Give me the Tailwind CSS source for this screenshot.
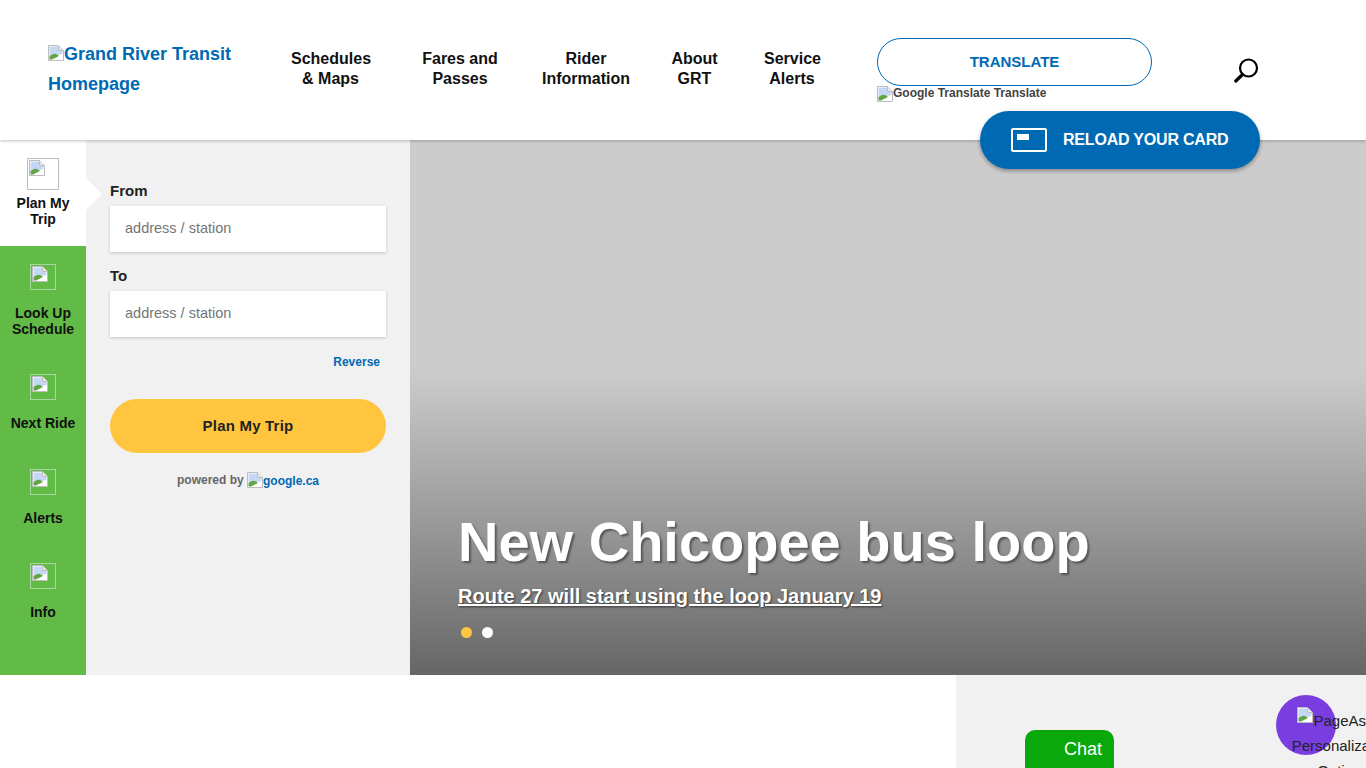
<!DOCTYPE html>
<html lang="en"><head><meta charset="utf-8"><title>Grand River Transit</title>
<script src="https://cdn.jsdelivr.net/npm/@tailwindcss/browser@4"></script></head>
<body class="m-0 h-[768px] w-[1366px] overflow-hidden bg-white font-['Liberation_Sans',Arial,sans-serif] relative">
<svg width="0" height="0" class="absolute"><defs>
<symbol id="broken" viewBox="0 0 16 16"><path d="M0.5 0.5H10.5L15.5 5.5V15.5H0.5Z" fill="#fff" stroke="#bdbdbd"/><path d="M1.5 1.5H10V6H14.5V9L1.5 12Z" fill="#c4d8f5"/><path d="M1.5 14.5V11.5C4 8.5 7 8 9 9.5L11 11L4 14.5Z" fill="#62a544"/><path d="M10.5 .5V5.5H15.5" fill="#e8e8e8" stroke="#bdbdbd"/><path d="M9 15L15 9V15Z" fill="#fff"/></symbol>
</defs></svg>
<header class="relative z-10 h-[140px] bg-white shadow-[0_1px_3px_rgba(0,0,0,0.25)]">
 <div class="flex h-full items-start">
  <a class="ml-[48px] mt-[39px] block w-[200px] text-[18px] leading-[30px] font-bold text-[#0069b4]"><svg class="inline-block h-4 w-4 align-[-1px]"><use href="#broken"/></svg>Grand River Transit Homepage</a>
  <nav class="mt-[49px] ml-[43px] flex text-center text-[16px] leading-[20px] font-bold text-[#111]">
   <a class="w-[79px]">Schedules<br>&amp; Maps</a>
   <a class="ml-[52px] w-[76px]">Fares and<br>Passes</a>
   <a class="ml-[44px] w-[88px]">Rider<br>Information</a>
   <a class="ml-[41px] w-[47px]">About<br>GRT</a>
   <a class="ml-[46px] w-[56px]">Service<br>Alerts</a>
  </nav>
  <div class="ml-[57px] mt-[38px] w-[275px]">
   <div class="flex h-[48px] items-center justify-center rounded-full border border-[#0069b4] text-[15px] font-bold text-[#0069b4]">TRANSLATE</div>
   <div class="flex h-4 items-start text-[12px] leading-[14px] font-bold text-[#444]"><svg class="h-4 w-4 shrink-0"><use href="#broken"/></svg><span>Google Translate Translate</span></div>
  </div>
  <svg class="ml-[82px] mt-[58px]" width="25" height="25" viewBox="0 0 25 25" fill="none" stroke="#000"><circle cx="14.5" cy="10" r="8.5" stroke-width="2.2"/><path d="M8.5 16.5L1.8 23" stroke-width="3.2" stroke-linecap="round"/></svg>
 </div>
</header>
<a class="absolute left-[980px] top-[111px] z-20 flex h-[58px] w-[280px] items-center rounded-full bg-[#0069b4] pl-[31px] text-[16px] font-bold tracking-[-0.2px] text-white shadow-[0_2px_4px_rgba(0,0,0,0.35)]">
 <svg width="36" height="24" viewBox="0 0 36 24" class="mr-[16px]"><rect x="1" y="1" width="34" height="22" rx="1" fill="none" stroke="#fff" stroke-width="2"/><rect x="6" y="6" width="12" height="6" fill="#fff"/></svg>RELOAD YOUR CARD</a>
<main class="flex h-[535px]">
 <aside class="flex w-[86px] shrink-0 flex-col bg-[#62bb46] text-center text-[14px] leading-[16px] font-bold text-[#111]">
  <div class="relative h-[106px] bg-white pt-[18px]">
   <div class="mx-auto flex h-[32px] w-[32px] border border-[#bdbdbd] p-px"><svg class="h-4 w-4"><use href="#broken"/></svg></div>
   <div class="mt-[5px]">Plan My<br>Trip</div>
   <div class="absolute left-[86px] top-[38px] h-0 w-0 border-y-[16px] border-l-[16px] border-y-transparent border-l-white"></div>
  </div>
  <div class="h-[104px] pt-[18px]">
   <div class="mx-auto h-[26px] w-[26px] border border-[#a9d79b] p-px"><svg class="h-4 w-4"><use href="#broken"/></svg></div>
   <div class="mt-[15px]">Look Up<br>Schedule</div>
  </div>
  <div class="h-[95px] pt-[24px]">
   <div class="mx-auto h-[26px] w-[26px] border border-[#a9d79b] p-px"><svg class="h-4 w-4"><use href="#broken"/></svg></div>
   <div class="mt-[15px]">Next Ride</div>
  </div>
  <div class="h-[94px] pt-[24px]">
   <div class="mx-auto h-[26px] w-[26px] border border-[#a9d79b] p-px"><svg class="h-4 w-4"><use href="#broken"/></svg></div>
   <div class="mt-[15px]">Alerts</div>
  </div>
  <div class="pt-[24px]">
   <div class="mx-auto h-[26px] w-[26px] border border-[#a9d79b] p-px"><svg class="h-4 w-4"><use href="#broken"/></svg></div>
   <div class="mt-[15px]">Info</div>
  </div>
 </aside>
 <section class="w-[324px] shrink-0 bg-[#f1f1f1] px-[24px] pt-[42px]">
  <label class="block text-[15px] leading-[18px] font-bold text-[#222]">From</label>
  <div class="mt-[6px] flex h-[46px] items-center bg-white pl-[15px] text-[14.5px] text-[#757575] shadow-[0_1px_3px_rgba(0,0,0,0.2)]">address / station</div>
  <label class="mt-[15px] block text-[15px] leading-[18px] font-bold text-[#222]">To</label>
  <div class="mt-[6px] flex h-[46px] items-center bg-white pl-[15px] text-[14.5px] text-[#757575] shadow-[0_1px_3px_rgba(0,0,0,0.2)]">address / station</div>
  <div class="mt-[18px] pr-[6px] text-right text-[12px] leading-[14px] font-bold text-[#0069b4]">Reverse</div>
  <div class="mt-[30px] flex h-[54px] items-center justify-center rounded-full bg-[#ffc53f] text-[15px] font-bold tracking-[0.2px] text-[#222]">Plan My Trip</div>
  <div class="mt-[19px] flex justify-center text-[12px] leading-[16px] font-bold text-[#666]"><span>powered by&nbsp;</span><svg class="h-4 w-4"><use href="#broken"/></svg><span class="text-[#0069b4] translate-y-px">google.ca</span></div>
 </section>
 <section class="flex flex-1 flex-col bg-[linear-gradient(to_bottom,#cccccc_0,#cccccc_43%,#666666_100%)] pl-[48px] pt-[368px]">
  <h1 class="text-[56px] leading-[68px] font-bold text-white [text-shadow:2px_2px_2px_rgba(0,0,0,0.4)]">New Chicopee bus loop</h1>
  <a class="mt-[8px] text-[20px] leading-[24px] font-bold text-white underline [text-shadow:1px_1px_2px_rgba(0,0,0,0.6)]">Route 27 will start using the loop January 19</a>
  <div class="mt-[19px] ml-[3px] flex gap-[10px]"><span class="h-[11px] w-[11px] rounded-full bg-[#ffc53f]"></span><span class="h-[11px] w-[11px] rounded-full bg-white"></span></div>
 </section>
</main>
<div class="flex h-[93px] justify-end">
 <div class="relative w-[410px] overflow-hidden bg-[#f1f1f1]">
  <div class="absolute left-[69px] top-[55px] h-[60px] w-[89px] rounded-[10px] bg-[#0aa80a] pl-[39px] pt-[8px] text-[18px] leading-[22px] text-white">Chat</div>
  <div class="absolute left-[320px] top-[20px] h-[60px] w-[60px] rounded-full bg-[#7a3ee0]"></div>
  <div class="absolute left-[332px] top-[32px] w-[110px] text-center text-[15px] leading-[25px] text-[#222]"><svg class="inline-block h-4 w-4 align-[3px]"><use href="#broken"/></svg>PageAssist Personalization Options</div>
 </div>
</div>
</body></html>
